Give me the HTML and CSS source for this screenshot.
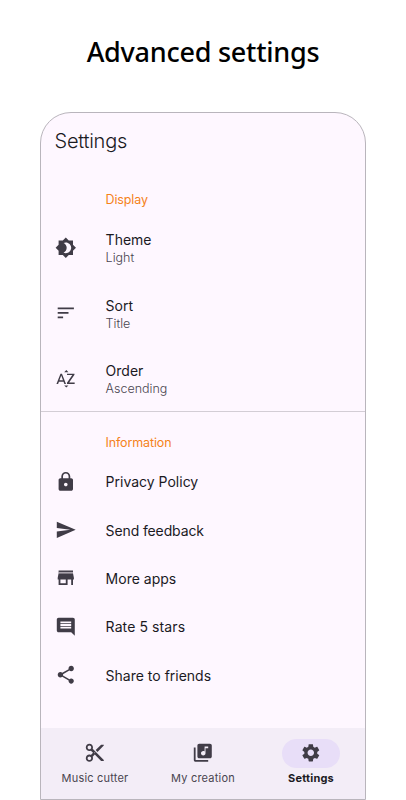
FILE: index.html
```html
<!DOCTYPE html>
<html lang="en">
<head>
<meta charset="utf-8">
<title>Advanced settings</title>
<link rel="stylesheet" href="styles.css">
</head>
<body>
<h1 class="headline"><span>Advanced settings</span></h1>
<main class="phone">
  <header class="appbar">Settings</header>
  <section class="group group-display">
    <h2 class="label">Display</h2>
    <div class="row tall">
      <svg class="icon" viewBox="0 0 24 24"><path d="M20 8.69V4h-4.69L12 .69 8.69 4H4v4.69L.69 12 4 15.31V20h4.69L12 23.31 15.31 20H20v-4.69L23.31 12 20 8.69zM12 18c-.89 0-1.74-.2-2.5-.55C11.56 16.5 13 14.42 13 12s-1.44-4.5-3.5-5.45C10.26 6.2 11.11 6 12 6c3.31 0 6 2.69 6 6s-2.69 6-6 6z"/></svg>
      <div class="pair"><div class="name">Theme</div><div class="value">Light</div></div>
    </div>
    <div class="row tall">
      <svg class="icon" viewBox="0 0 24 24"><path d="M3 18h6v-2H3v2zM3 6v2h18V6H3zm0 7h12v-2H3v2z"/></svg>
      <div class="pair"><div class="name">Sort</div><div class="value">Title</div></div>
    </div>
    <div class="row tall">
      <svg class="icon" viewBox="0 0 24 24"><path d="M14.94 4.66h-4.72l2.36-2.36zm-4.69 14.71h4.66l-2.33 2.33zM6.1 6.27L1.6 17.73h1.84l.92-2.45h5.11l.92 2.45h1.84L7.74 6.27H6.1zm-1.13 7.37l1.94-5.18 1.94 5.18H4.97zm10.76 2.5h6.12v1.59h-8.53v-1.29l5.92-8.56h-5.88v-1.6h8.3v1.26l-5.93 8.6z"/></svg>
      <div class="pair"><div class="name">Order</div><div class="value">Ascending</div></div>
    </div>
  </section>
  <section class="group group-info">
    <h2 class="label">Information</h2>
    <div class="row">
      <svg class="icon" viewBox="0 0 24 24"><path d="M18 8h-1V6c0-2.76-2.24-5-5-5S7 3.24 7 6v2H6c-1.1 0-2 .9-2 2v10c0 1.1.9 2 2 2h12c1.1 0 2-.9 2-2V10c0-1.1-.9-2-2-2zm-6 9c-1.1 0-2-.9-2-2s.9-2 2-2 2 .9 2 2-.9 2-2 2zm3.1-9H8.900V6c0-1.710 1.390-3.100 3.100-3.100s3.100 1.390 3.100 3.100v2z"/></svg>
      <div class="name">Privacy Policy</div>
    </div>
    <div class="row">
      <svg class="icon" viewBox="0 0 24 24"><path d="M2.010 21L23 12 2.010 3 2 10l15 2-15 2z"/></svg>
      <div class="name feedback">Send feedback</div>
    </div>
    <div class="row">
      <svg class="icon" viewBox="0 0 24 24"><path d="M20 4H4v2h16V4zm1 10v-2l-1-5H4l-1 5v2h1v6h10v-6h4v6h2v-6h1zm-9 4H6v-4h6v4z"/><path class="awning" d="M4 5.500h16v1.500H4z"/></svg>
      <div class="name">More apps</div>
    </div>
    <div class="row">
      <svg class="icon" viewBox="0 0 24 24"><path d="M21.990 4c0-1.100-.89-2-1.990-2H4c-1.100 0-2 .9-2 2v12c0 1.100.9 2 2 2h14l4 4-.010-18zM18 14H6v-2h12v2zm0-3H6V9h12v2zm0-3H6V6h12v2z"/></svg>
      <div class="name rate">Rate 5 stars</div>
    </div>
    <div class="row">
      <svg class="icon" viewBox="0 0 24 24"><path d="M18 16.080c-.76 0-1.440.3-1.960.77L8.910 12.700c.05-.23.09-.46.09-.7s-.04-.47-.09-.7l7.050-4.110c.54.5 1.250.81 2.040.81 1.660 0 3-1.340 3-3s-1.340-3-3-3-3 1.340-3 3c0 .24.04.47.09.7L8.040 9.810C7.500 9.310 6.790 9 6 9c-1.660 0-3 1.340-3 3s1.340 3 3 3c.79 0 1.500-.31 2.040-.81l7.120 4.160c-.05.21-.08.43-.08.65 0 1.610 1.310 2.920 2.920 2.920s2.920-1.310 2.920-2.920-1.310-2.920-2.920-2.920z"/></svg>
      <div class="name">Share to friends</div>
    </div>
  </section>
  <nav class="nav">
    <div class="tab">
      <span class="pill"><svg class="icon" viewBox="0 0 24 24"><path d="M9.640 7.640c.23-.5.36-1.050.36-1.640 0-2.210-1.790-4-4-4S2 3.790 2 6s1.790 4 4 4c.59 0 1.140-.13 1.640-.36L10 12l-2.360 2.360C7.140 14.130 6.590 14 6 14c-2.210 0-4 1.790-4 4s1.790 4 4 4 4-1.790 4-4c0-.59-.13-1.140-.36-1.640L12 14l7 7h3v-1L9.640 7.640zM6 8c-1.100 0-2-.89-2-2s.9-2 2-2 2 .89 2 2-.9 2-2 2zm0 12c-1.100 0-2-.89-2-2s.9-2 2-2 2 .89 2 2-.9 2-2 2zm6-7.500c-.28 0-.5-.22-.5-.5s.22-.5.5-.5.5.22.5.5-.22.5-.5.5zM19 3l-6 6 2 2 7-7V3z"/></svg></span>
      <span class="caption">Music cutter</span>
    </div>
    <div class="tab">
      <span class="pill"><svg class="icon" viewBox="0 0 24 24"><path d="M20 2H8c-1.100 0-2 .9-2 2v12c0 1.100.9 2 2 2h12c1.100 0 2-.9 2-2V4c0-1.100-.9-2-2-2zm-2 5h-3v5.500c0 1.380-1.120 2.500-2.500 2.500S10 13.880 10 12.500s1.120-2.500 2.500-2.500c.57 0 1.080.19 1.500.51V5h4v2zM4 6H2v14c0 1.100.9 2 2 2h14v-2H4V6z"/></svg></span>
      <span class="caption">My creation</span>
    </div>
    <div class="tab active">
      <span class="pill"><svg class="icon" viewBox="0 0 24 24"><path d="M19.140 12.940c.04-.3.060-.61.060-.94 0-.32-.02-.64-.07-.94l2.030-1.580c.18-.14.23-.41.12-.61l-1.920-3.320c-.12-.22-.37-.29-.59-.22l-2.390.96c-.5-.38-1.030-.7-1.620-.94L14.400 2.810c-.04-.24-.24-.41-.48-.41h-3.840c-.24 0-.43.17-.47.41L9.250 5.350c-.59.24-1.130.57-1.620.94l-2.390-.96c-.22-.08-.47 0-.59.22L2.740 8.870c-.12.21-.08.47.12.61l2.030 1.580c-.05.3-.09.63-.09.94s.02.64.07.94l-2.030 1.580c-.18.14-.23.41-.12.61l1.920 3.320c.12.22.37.29.59.22l2.390-.96c.5.38 1.030.7 1.620.94l.36 2.540c.05.24.24.41.48.41h3.840c.24 0 .44-.17.47-.41l.36-2.540c.59-.24 1.130-.56 1.620-.94l2.390.96c.22.08.47 0 .59-.22l1.920-3.320c.12-.22.07-.47-.12-.61l-2.010-1.580zM12 15.600c-1.980 0-3.600-1.620-3.600-3.600s1.620-3.600 3.600-3.600 3.600 1.620 3.600 3.600-1.620 3.600-3.600 3.600z"/></svg></span>
      <span class="caption">Settings</span>
    </div>
  </nav>
</main>
</body>
</html>
```
FILE: styles.css
```css
* { box-sizing: border-box; }

body {
  margin: 0;
  height: 800px;
  display: flex;
  flex-direction: column;
  align-items: center;
  overflow: hidden;
  background: #fff;
  font-family: Inter, Roboto, sans-serif;
  color: #1b1a1f;
}

.headline {
  margin: 0;
  height: 112px;
  padding-top: 34px;
  font: 500 27px/36px "Noto Sans", "Open Sans", sans-serif;
  letter-spacing: -0.25px;
  color: #000;
}

.phone {
  width: 326px;
  height: 688px;
  display: flex;
  flex-direction: column;
  border: 1px solid #b9b5bc;
  border-radius: 31px 31px 0 0;
  overflow: hidden;
  background: #fef7ff;
}

.appbar {
  height: 56px;
  padding-left: 13.5px;
  font-size: 20px;
  font-weight: 300;
  line-height: 57px;
  letter-spacing: -0.25px;
}

.group-info { border-top: 1px solid #d3cdd5; }
.group-display { height: 242px; }

.label {
  margin: 0;
  height: 46px;
  padding: 22px 0 0 64.5px;
  font-size: 12.5px;
  font-weight: 400;
  line-height: 18px;
  letter-spacing: -0.13px;
  color: #f5821a;
}

.row {
  height: 48.3px;
  padding-left: 14px;
  display: flex;
  align-items: center;
  gap: 29px;
}

.group-info .label { height: 45.4px; }

.tall { height: 65.5px; }

.pair { padding-top: 2px; }

.icon {
  width: 21.6px;
  height: 21.6px;
  flex: none;
  fill: #403c47;
}

.awning { fill: #aaa4ad; }

.name {
  font-size: 14px;
  line-height: 19px;
}

.row > .name { padding-top: 0.6px; }

.feedback { letter-spacing: -0.12px; }
.rate { letter-spacing: 0.1px; }

.value {
  font-size: 12.5px;
  font-weight: 300;
  line-height: 18px;
  color: #49454f;
}

.nav {
  margin-top: auto;
  height: 71px;
  display: flex;
  background: #f3edf7;
}

.tab {
  flex: 1;
  padding-top: 10.5px;
  display: flex;
  flex-direction: column;
  align-items: center;
  gap: 3.5px;
}

.pill {
  width: 58px;
  height: 29px;
  display: flex;
  align-items: center;
  justify-content: center;
  border-radius: 15px;
}

.active .pill { background: #e8def8; }

.caption {
  font-size: 11px;
  line-height: 15px;
  letter-spacing: 0.2px;
  color: #49454f;
}

.active .caption {
  font-weight: 700;
  color: #1b1a1f;
}
```
